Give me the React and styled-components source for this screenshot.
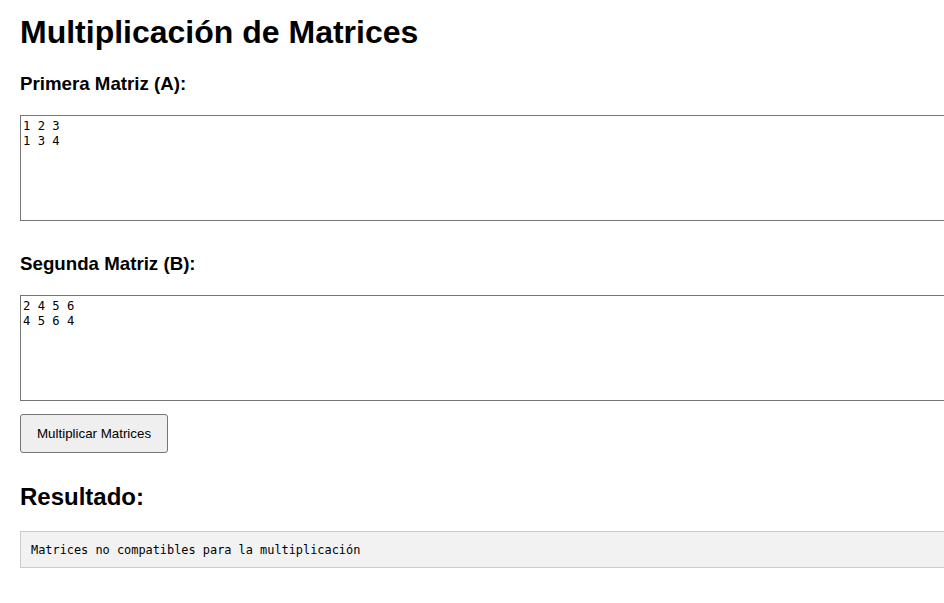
import React from "react";
import styled, { createGlobalStyle } from "styled-components";

const GlobalStyle = createGlobalStyle`
  html, body {
    margin: 0;
    padding: 0;
    background: #ffffff;
    overflow: hidden;
  }
  body {
    font-family: "Liberation Sans", Arial, sans-serif;
    color: #000000;
  }
`;

const Page = styled.div`
  padding: 0 20px;
  overflow: hidden;
`;

const Title = styled.h1`
  font-size: 32px;
  font-weight: bold;
  margin: 14px 0 22px;
`;

const MatrixField = styled.div`
  & + & {
    margin-top: 32px;
  }
`;

const Label = styled.h3`
  font-size: 18.72px;
  font-weight: bold;
  margin: 0 0 20px;
`;

const MatrixInput = styled.textarea`
  display: block;
  box-sizing: content-box;
  width: calc(100% + 40px);
  height: 100px;
  margin: 0;
  padding: 3px 2px 1px;
  border: 1px solid #767676;
  font-family: "DejaVu Sans Mono", "Liberation Mono", monospace;
  font-size: 12.2px;
  line-height: 15px;
  color: #000000;
  background: #ffffff;
  resize: none;
  outline: none;
`;

const Button = styled.button`
  display: block;
  margin-top: 13px;
  padding: 11px 16px;
  font-family: "Liberation Sans", Arial, sans-serif;
  font-size: 13.333px;
  color: #000000;
  background: #efefef;
  border: 1px solid #767676;
  border-radius: 3px;
  cursor: pointer;
`;

const ResultTitle = styled.h2`
  font-size: 24px;
  font-weight: bold;
  margin: 30px 0 20px;
`;

const ResultBox = styled.pre`
  box-sizing: content-box;
  width: calc(100% + 40px);
  margin: 0;
  padding: 11px 10px 9px;
  background: #f2f2f2;
  border: 1px solid #cccccc;
  font-family: "DejaVu Sans Mono", "Liberation Mono", monospace;
  font-size: 11.9px;
  line-height: 15px;
  color: #000000;
`;

export default function App() {
  const [a, setA] = React.useState("1 2 3\n1 3 4");
  const [b, setB] = React.useState("2 4 5 6\n4 5 6 4");
  return (
    <>
      <GlobalStyle />
      <Page>
        <Title>Multiplicación de Matrices</Title>
        <MatrixField>
          <Label>Primera Matriz (A):</Label>
          <MatrixInput value={a} onChange={(e) => setA(e.target.value)} />
        </MatrixField>
        <MatrixField>
          <Label>Segunda Matriz (B):</Label>
          <MatrixInput value={b} onChange={(e) => setB(e.target.value)} />
        </MatrixField>
        <Button>Multiplicar Matrices</Button>
        <ResultTitle>Resultado:</ResultTitle>
        <ResultBox>Matrices no compatibles para la multiplicación</ResultBox>
      </Page>
    </>
  );
}
